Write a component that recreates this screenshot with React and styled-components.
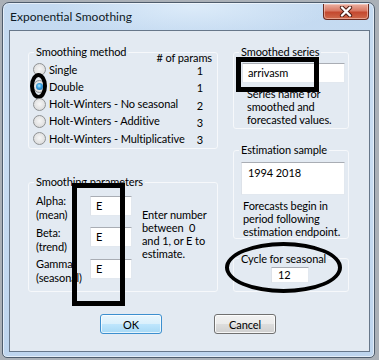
import React from "react";
import styled, { createGlobalStyle, css } from "styled-components";

const GlobalStyle = createGlobalStyle`
  html, body {
    margin: 0;
  }
  body {
    width: 379px;
    height: 360px;
    box-sizing: border-box;
    padding: 2px 0 0 2px;
    overflow: hidden;
    background: #aab0b7;
    font-family: Lato, "Liberation Sans", sans-serif;
    font-size: 11px;
    letter-spacing: -0.1px;
    color: #000;
  }
`;

const Window = styled.div`
  box-sizing: border-box;
  width: 373px;
  height: 356px;
  display: flex;
  flex-direction: column;
  border: 1px solid #4e5c6c;
  border-radius: 7px 7px 5px 5px;
  background: radial-gradient(ellipse 140px 30px at 190px 4px, #dcebf9 0, rgba(220, 235, 249, 0) 100%),
    linear-gradient(180deg, #c4daf1 0, #c9ddf2 40%, #bed5ee 100%);
  box-shadow: inset 0 0 0 1px rgba(255, 255, 255, 0.55);
`;

const TitleBar = styled.div`
  height: 27px;
  display: flex;
  justify-content: space-between;
  align-items: flex-start;
  padding-left: 7px;
`;

const Title = styled.div`
  margin-top: 6px;
  line-height: 15px;
  font-size: 12px;
  letter-spacing: 0;
  color: #0e1a26;
`;

const CloseButton = styled.div`
  box-sizing: border-box;
  width: 46px;
  height: 16px;
  margin: 1px 5px 0 0;
  display: flex;
  align-items: center;
  justify-content: center;
  border: 1px solid #6a2a1f;
  border-top: none;
  border-radius: 0 0 4px 4px;
  background: linear-gradient(180deg, #eab0a2 0, #d87863 45%, #c4482f 55%, #cf6a4c 100%);
  box-shadow: inset 0 0 0 1px rgba(255, 220, 210, 0.5);
`;

const Client = styled.div`
  flex: 1;
  box-sizing: border-box;
  margin: 0 4px 5px 6px;
  padding: 14px 0 0 18px;
  border: 1px solid #67778a;
  background: #e3eaf2;
  white-space: nowrap;
`;

const Columns = styled.div`
  display: flex;
  align-items: flex-start;
  gap: 15px;
`;

const Column = styled.div`
  width: ${(p) => p.$width}px;
  display: flex;
  flex-direction: column;
`;

const GroupWrap = styled.div`
  position: relative;
  margin-top: ${(p) => p.$top || 0}px;
`;

const Group = styled.fieldset`
  margin: 0;
  padding: 0;
  min-width: 0;
  border: 1px solid #f6f8fb;
  border-radius: 3px;
`;

const Legend = styled.legend`
  margin-left: 5px;
  padding: 0 2px;
  line-height: 14px;
`;

const ParamsHead = styled.div`
  margin: -8px 0 -4px;
  padding-right: 5px;
  line-height: 14px;
  text-align: right;
`;

const MethodRow = styled.div`
  display: grid;
  grid-template-columns: 13px 1fr 16px;
  column-gap: 3px;
  align-items: center;
  height: 17.25px;
  padding: 0 9px 0 4px;
  line-height: 14px;
`;

const Count = styled.span`
  padding-top: 3px;
  text-align: center;
`;

const Radio = styled.span`
  position: relative;
  box-sizing: border-box;
  width: 13px;
  height: 13px;
  border-radius: 50%;
  border: 1px solid #8f9294;
  background: radial-gradient(circle at 50% 45%, #f6f6f6 0, #e2e2e2 60%, #cfcfcf 100%);
  ${(p) =>
    p.$checked &&
    css`
      &::after {
        content: "";
        position: absolute;
        left: 2px;
        top: 2px;
        width: 7px;
        height: 7px;
        border-radius: 50%;
        background: radial-gradient(circle at 45% 40%, #b8ecff 0, #3aa1e0 40%, #0f5c9e 100%);
      }
    `}
`;

const DoubleRing = styled.span`
  position: absolute;
  left: -4px;
  top: -8.5px;
  width: 17px;
  height: 26px;
  box-sizing: border-box;
  border: 4px solid #000;
  border-radius: 50%;
`;

const ParamsBody = styled.div`
  display: flex;
  align-items: flex-start;
  padding: 5px 0 6px 7px;
`;

const ParamsFields = styled.div`
  display: grid;
  grid-template-columns: 54px 42px;
  row-gap: 3.5px;
  align-items: start;
`;

const ParamLabel = styled.div`
  line-height: 14px;
`;

const Field = styled.div`
  box-sizing: border-box;
  width: ${(p) => p.$w}px;
  height: ${(p) => p.$h}px;
  margin: ${(p) => p.$margin || 0};
  display: flex;
  align-items: ${(p) => (p.$top ? "flex-start" : "center")};
  padding: ${(p) => p.$pad || "0 0 0 5px"};
  background: #fff;
  border: 1px solid #e2e8ef;
  border-top-color: #a9adb4;
  border-left-color: #dde2e9;
  line-height: 14px;
`;

const Help = styled.div`
  margin: ${(p) => p.$margin || 0};
  line-height: 13px;
`;

const ParamsBox = styled.span`
  position: absolute;
  left: 44px;
  top: 8px;
  width: 53px;
  height: 123px;
  box-sizing: border-box;
  border: 5px solid #000;
`;

const SeriesBox = styled.span`
  position: absolute;
  left: 3px;
  top: 12px;
  width: 83px;
  height: 35px;
  box-sizing: border-box;
  border: 5px solid #000;
`;

const CycleRing = styled.span`
  position: absolute;
  left: -8px;
  top: -10px;
  width: 117px;
  height: 51px;
  box-sizing: border-box;
  border: 4px solid #000;
  border-radius: 50%;
`;

const GroupBody = styled.div`
  padding: ${(p) => p.$pad};
`;

const ButtonRow = styled.div`
  display: flex;
  gap: 52px;
  margin-top: 22px;
  padding-left: 72px;
`;

const Button = styled.div`
  box-sizing: border-box;
  width: 62px;
  height: 20px;
  display: flex;
  align-items: center;
  justify-content: center;
  border-radius: 3px;
  border: 1px solid ${(p) => (p.$primary ? "#3c8fcf" : "#707070")};
  background: ${(p) =>
    p.$primary
      ? "linear-gradient(180deg, #eaf6fd 0, #d9f0fc 50%, #bee6fd 51%, #a7d9f5 100%)"
      : "linear-gradient(180deg, #f2f2f2 0, #ebebeb 50%, #dddddd 51%, #cfcfcf 100%)"};
  box-shadow: inset 0 0 0 1px ${(p) => (p.$primary ? "rgba(255,255,255,0.7)" : "rgba(255,255,255,0.8)")};
`;

const methods = [
  { label: "Single", count: 1 },
  { label: "Double", count: 1, checked: true },
  { label: "Holt-Winters - No seasonal", count: 2 },
  { label: "Holt-Winters - Additive", count: 3 },
  { label: "Holt-Winters - Multiplicative", count: 3 },
];

const params = [
  { name: "Alpha:", sub: "(mean)" },
  { name: "Beta:", sub: "(trend)" },
  { name: "Gamma:", sub: "(seasonal)" },
];

const CloseIcon = () => (
  <svg width="14" height="11" viewBox="0 0 14 11">
    <path d="M3 1.5 L11 9.5 M11 1.5 L3 9.5" stroke="#4a1a12" strokeWidth="4.2" strokeLinecap="round" />
    <path d="M3 1.5 L11 9.5 M11 1.5 L3 9.5" stroke="#fff" strokeWidth="2.4" strokeLinecap="round" />
  </svg>
);

export default function App() {
  return (
    <>
      <GlobalStyle />
      <Window>
        <TitleBar>
          <Title>Exponential Smoothing</Title>
          <CloseButton>
            <CloseIcon />
          </CloseButton>
        </TitleBar>
        <Client>
          <Columns>
            <Column $width={190}>
              <GroupWrap>
                <Group>
                  <Legend>Smoothing method</Legend>
                  <ParamsHead># of params</ParamsHead>
                  {methods.map((m) => (
                    <MethodRow key={m.label}>
                      <Radio $checked={m.checked}>{m.checked && <DoubleRing />}</Radio>
                      <span>{m.label}</span>
                      <Count>{m.count}</Count>
                    </MethodRow>
                  ))}
                  <div style={{ height: 1 }} />
                </Group>
              </GroupWrap>
              <GroupWrap $top={26}>
                <Group>
                  <Legend>Smoothing parameters</Legend>
                  <ParamsBody>
                    <ParamsFields>
                      {params.map((p) => (
                        <React.Fragment key={p.name}>
                          <ParamLabel>
                            {p.name}
                            <br />
                            {p.sub}
                          </ParamLabel>
                          <Field $w={42} $h={20} $margin="1.5px 0 0">
                            E
                          </Field>
                        </React.Fragment>
                      ))}
                    </ParamsFields>
                    <Help $margin="13.5px 0 0 10px">
                      Enter number
                      <br />
                      between &nbsp;0
                      <br />
                      and 1, or E to
                      <br />
                      estimate.
                    </Help>
                  </ParamsBody>
                </Group>
                <ParamsBox />
              </GroupWrap>
            </Column>
            <Column $width={116}>
              <GroupWrap>
                <Group>
                  <Legend>Smoothed series</Legend>
                  <GroupBody $pad="4px 0 2.5px 8px">
                    <Field $w={103} $h={20}>
                      arrivasm
                    </Field>
                    <Help $margin="3.5px 0 0 5px">
                      Series name for
                      <br />
                      smoothed and
                      <br />
                      forecasted values.
                    </Help>
                  </GroupBody>
                </Group>
                <SeriesBox />
              </GroupWrap>
              <GroupWrap $top={14}>
                <Group>
                  <Legend>Estimation sample</Legend>
                  <GroupBody $pad="5px 0 0 7px">
                    <Field $w={104} $h={33} $top $pad="3px 0 0 6px">
                      1994 2018
                    </Field>
                    <Help $margin="3.5px 0 0 2px">
                      Forecasts begin in
                      <br />
                      period following
                      <br />
                      estimation endpoint.
                    </Help>
                  </GroupBody>
                </Group>
              </GroupWrap>
              <GroupWrap $top={13}>
                <Group>
                  <Legend>Cycle for seasonal</Legend>
                  <GroupBody $pad="1px 0 8px 37px">
                    <Field $w={38} $h={16} $pad="0 0 0 6px">
                      12
                    </Field>
                  </GroupBody>
                </Group>
                <CycleRing />
              </GroupWrap>
            </Column>
          </Columns>
          <ButtonRow>
            <Button $primary>OK</Button>
            <Button>Cancel</Button>
          </ButtonRow>
        </Client>
      </Window>
    </>
  );
}
